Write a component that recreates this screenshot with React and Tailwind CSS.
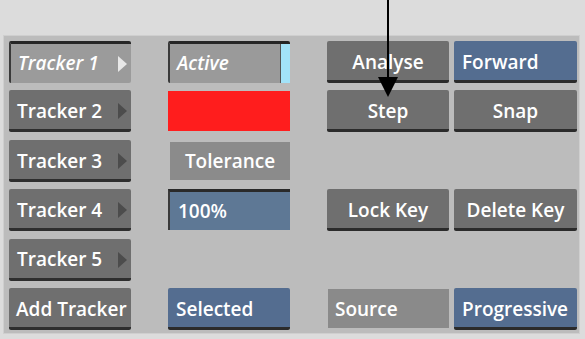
const font = { fontFamily: '"Open Sans", "DejaVu Sans", sans-serif' };

const Arrow = ({ dim }) => (
  <span
    className={`ml-auto mr-[4px] h-0 w-0 border-y-[8px] border-l-[9px] border-y-transparent ${
      dim ? 'border-l-[#4c4c4c]' : 'border-l-[#e8e8e8]'
    }`}
  />
);

const TrackerBtn = ({ label, active }) =>
  active ? (
    <div className="flex h-[42px] items-center rounded-[2px] border-t-[3px] border-l-2 border-t-[#262626] border-l-[#3a3a3a] bg-[#9b9b9b] pl-[7px] italic text-white">
      <span>{label}</span>
      <Arrow />
    </div>
  ) : (
    <div className="flex h-[42px] items-center rounded-[2px] border-b-[3px] border-b-[#2e2e2e] bg-[#6f6f6f] pl-[8px] pt-[3px] text-white">
      <span>{label}</span>
      <Arrow dim />
    </div>
  );

const Btn = ({ label, blue, left }) => (
  <div
    className={`flex h-[42px] items-center rounded-[2px] border-b-[3px] border-b-[#2b2b2b] pt-[3px] text-white ${
      blue ? 'bg-[#546d90]' : 'bg-[#6f6f6f]'
    } ${left ? 'justify-start pl-[8px]' : 'justify-center'}`}
  >
    {label}
  </div>
);

export default function App() {
  return (
    <div className="relative h-[339px] w-[585px] overflow-hidden bg-[#dcdcdc]" style={font}>
      <div className="ml-[3px] mt-[35px] h-[299px] w-[577px] whitespace-nowrap border border-[#cfcfcf] bg-[#bcbcbc] pl-[5px] pt-[5px] text-[19px] font-semibold">
        <div className="grid grid-cols-[122px_37px_122px_37px_122px_5px_123px] grid-rows-[repeat(6,42px)] gap-y-[7.4px]">
          <div className="col-start-1 row-start-1"><TrackerBtn label="Tracker 1" active /></div>
          <div className="col-start-1 row-start-2"><TrackerBtn label="Tracker 2" /></div>
          <div className="col-start-1 row-start-3"><TrackerBtn label="Tracker 3" /></div>
          <div className="col-start-1 row-start-4"><TrackerBtn label="Tracker 4" /></div>
          <div className="col-start-1 row-start-5"><TrackerBtn label="Tracker 5" /></div>
          <div className="col-start-1 row-start-6">
            <div className="flex h-[42px] items-center rounded-[2px] border-b-[3px] border-b-[#2e2e2e] bg-[#6f6f6f] pl-[7px] pt-[3px] text-white">
              Add Tracker
            </div>
          </div>

          <div className="col-start-3 row-start-1">
            <div className="flex h-[42px] items-stretch rounded-[2px] border-t-[3px] border-l-2 border-t-[#262626] border-l-[#3a3a3a] bg-[#9a9a9a] italic text-white">
              <span className="flex flex-1 items-center pl-[7px]">Active</span>
              <span className="w-[10px] border-l border-[#555] bg-[#a2e3f9]" />
            </div>
          </div>
          <div className="col-start-3 row-start-2 pt-px">
            <div className="h-[40px] bg-[#ff1d1d]" />
          </div>
          <div className="col-start-3 row-start-3 pl-[2px] pt-[2px]">
            <div className="flex h-[38px] items-center justify-center bg-[#8b8b8b] pt-px text-white">
              Tolerance
            </div>
          </div>
          <div className="col-start-3 row-start-4">
            <div className="flex h-[41px] items-center border-t-[3px] border-l-2 border-t-[#2a2a2a] border-l-[#3a3a3a] bg-[#5e7895] pl-[8px] text-white">
              100%
            </div>
          </div>
          <div className="col-start-3 row-start-6">
            <Btn label="Selected" blue left />
          </div>

          <div className="col-start-5 row-start-1"><Btn label="Analyse" /></div>
          <div className="col-start-7 row-start-1"><Btn label="Forward" blue left /></div>
          <div className="col-start-5 row-start-2"><Btn label="Step" /></div>
          <div className="col-start-7 row-start-2"><Btn label="Snap" /></div>
          <div className="col-start-5 row-start-4"><Btn label="Lock Key" /></div>
          <div className="col-start-7 row-start-4"><Btn label="Delete Key" /></div>
          <div className="col-start-5 row-start-6 pl-px pt-px">
            <div className="flex h-[39px] items-center bg-[#8a8a8a] pl-[7px] pt-px text-white">
              Source
            </div>
          </div>
          <div className="col-start-7 row-start-6"><Btn label="Progressive" blue left /></div>
        </div>
      </div>

      <svg className="absolute left-[377px] top-0" width="22" height="98" viewBox="0 0 22 98">
        <line x1="11" y1="0" x2="11" y2="80" stroke="#000" strokeWidth="2" />
        <polygon points="1,77 21,77 11,97" fill="#000" />
      </svg>
    </div>
  );
}
